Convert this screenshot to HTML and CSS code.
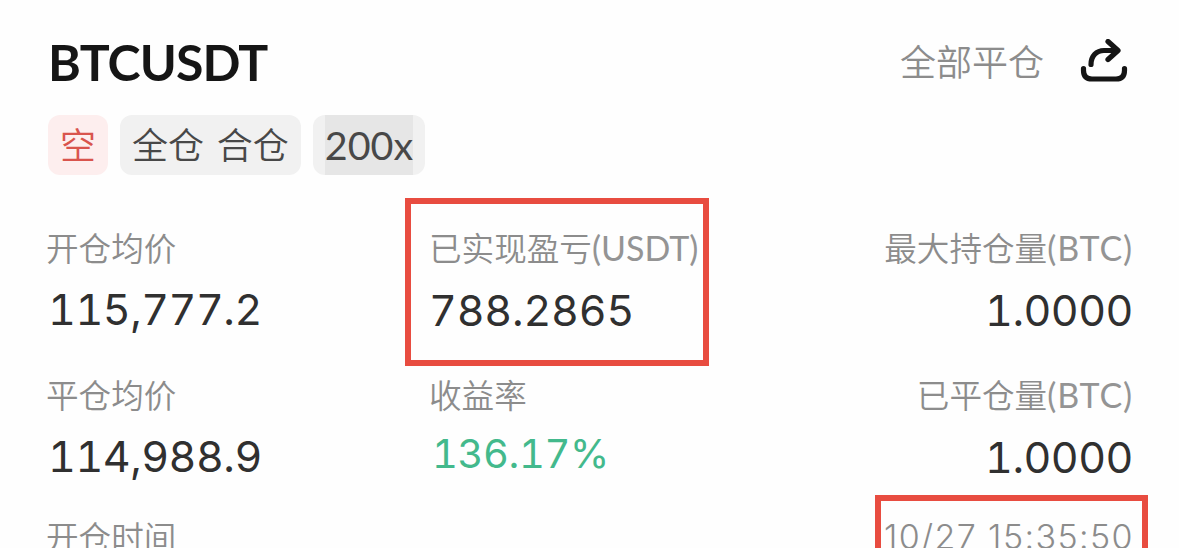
FILE: index.html
```html
<!DOCTYPE html>
<html lang="zh-CN">
<head>
  <meta charset="UTF-8" />
  <meta name="viewport" content="width=device-width, initial-scale=1" />
  <title>BTCUSDT</title>
  <link rel="stylesheet" href="styles.css">
</head>
<body>
<div class="position">
  <div class="header">
    <h1>BTCUSDT</h1>
    <div class="actions">
      <span class="close-all">全部平仓</span>
      <svg class="share" viewBox="0 0 48 46" fill="none" stroke="#151515" stroke-width="5.2" stroke-linecap="round" stroke-linejoin="round">
        <path d="M3.500 29.500v2q0 8.500 8.500 8.500h24q8.500 0 8.500-8.500v-2" />
        <path d="M11 25.500C11 17 16.500 11.500 24 11.500H37" />
        <path d="M28 2.500L38 11.500 28 20.500" />
      </svg>
    </div>
  </div>

  <div class="tags">
    <span class="tag short">空</span>
    <span class="tag">全仓 合仓</span>
    <span class="tag leverage"><span>200x</span></span>
  </div>

  <div class="stats">
    <div class="stat">
      <div class="label">开仓均价</div>
      <div class="value">115,777.2</div>
    </div>
    <div class="stat marked">
      <div class="label">已实现盈亏<span class="unit">(USDT)</span></div>
      <div class="value">788.2865</div>
    </div>
    <div class="stat right">
      <div class="label">最大持仓量<span class="unit">(BTC)</span></div>
      <div class="value">1.0000</div>
    </div>

    <div class="stat">
      <div class="label">平仓均价</div>
      <div class="value">114,988.9</div>
    </div>
    <div class="stat">
      <div class="label">收益率</div>
      <div class="value profit">136.17%</div>
    </div>
    <div class="stat right">
      <div class="label">已平仓量<span class="unit">(BTC)</span></div>
      <div class="value">1.0000</div>
    </div>
  </div>

  <div class="time-row">
    <div class="label">开仓时间</div>
    <div class="time">10/27 15:35:50</div>
  </div>
</div>
</body>
</html>
```
FILE: styles.css
```css
body {
  margin: 0;
  background: #fefefe;
  font-family: Lato, "Noto Sans CJK SC", sans-serif;
  color: #303030;
  height: 548px;
  overflow: hidden;
}

.position {
  padding: 32px 46px 0;
}

.header {
  display: flex;
  justify-content: space-between;
  align-items: center;
  height: 60px;
}

h1 {
  margin: 0;
  padding-left: 2px;
  font-family: Lato, sans-serif;
  font-size: 50px;
  font-weight: 700;
  line-height: 60px;
  letter-spacing: -0.9px;
  color: #151515;
}

.actions {
  display: flex;
  align-items: center;
  gap: 36px;
  padding-right: 5px;
}

.close-all {
  font-family: "Noto Sans CJK SC", sans-serif;
  font-size: 36px;
  font-weight: 350;
  line-height: 56px;
  padding-bottom: 4px;
  color: #8c8c8c;
}

.share {
  width: 48px;
  height: 46px;
}

/* Tags */
.tags {
  display: flex;
  gap: 12px;
  margin: 23px 0 0 2px;
}

.tag {
  height: 60px;
  padding: 0 12px;
  border-radius: 12px;
  background: #f1f1f1;
  font-size: 36px;
  font-weight: 350;
  line-height: 61px;
  word-spacing: 3px;
  color: #484848;
}

.tag.short {
  background: #fdeeee;
  color: #d9544d;
}

.leverage span {
  display: block;
  height: 60px;
  background: #e6e6e6;
  font-family: Lato, sans-serif;
  font-size: 39.5px;
  font-weight: 400;
  line-height: 59px;
}

/* Stats */
.stats {
  display: grid;
  grid-template-columns: 383px 300px 1fr;
  row-gap: 34px;
  margin-top: 52px;
}

.stat {
  position: relative;
  height: 113px;
  white-space: nowrap;
}

.right {
  text-align: right;
}

.label {
  font-family: "Noto Sans CJK SC", sans-serif;
  font-size: 32.6px;
  font-weight: 350;
  line-height: 40px;
  color: #8c8c8c;
}

.unit {
  font-family: Lato, sans-serif;
  font-size: 34px;
  font-weight: 400;
  color: #949494;
}

.right .unit {
  letter-spacing: 0.9px;
}

.value {
  margin-top: 12px;
  padding-left: 2px;
  font-family: Inter, sans-serif;
  font-size: 43px;
  font-weight: 400;
  font-variant-numeric: tabular-nums;
  line-height: 60px;
  letter-spacing: -0.5px;
}

.marked .value {
  padding-left: 0;
  letter-spacing: -0.2px;
}

.profit {
  padding-left: 3px;
  font-size: 40px;
  line-height: 56px;
  letter-spacing: -0.4px;
  color: #43b98c;
}

/* Red marker frames */
.marked::before,
.time-row::after {
  content: "";
  position: absolute;
  box-sizing: border-box;
  border: 6px solid #e84c40;
}

.marked::before {
  left: -24px;
  top: -29px;
  width: 304px;
  height: 168px;
}

.time-row {
  position: relative;
  display: flex;
  justify-content: space-between;
  margin-top: 29px;
}

.time-row::after {
  right: -15px;
  top: -21px;
  width: 273px;
  height: 90px;
}

.time {
  font-family: Inter, sans-serif;
  font-size: 34px;
  font-weight: 300;
  line-height: 42px;
  letter-spacing: 1.4px;
  margin-right: -1px;
  color: #8c8c8c;
}
```
